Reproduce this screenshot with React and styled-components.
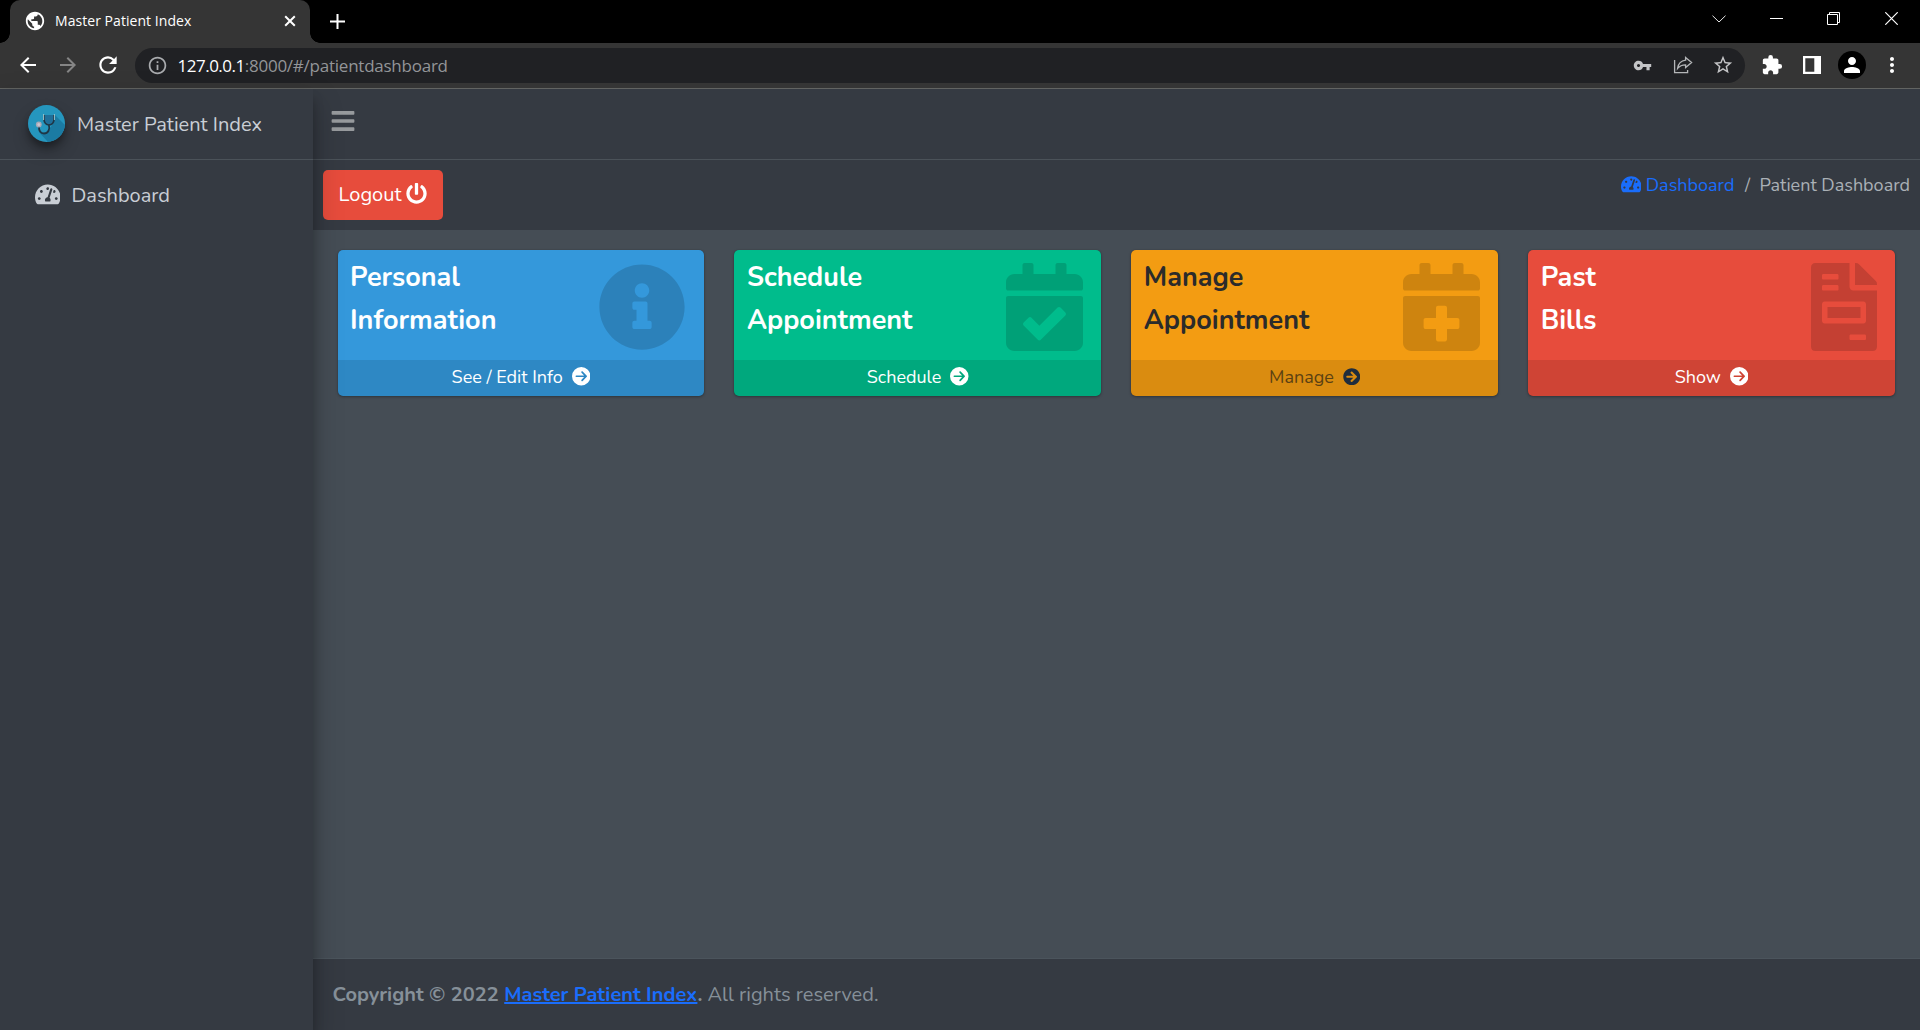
import React from "react";
import styled, { createGlobalStyle } from "styled-components";
import {
  FaTachometerAlt,
  FaBars,
  FaPowerOff,
  FaInfoCircle,
  FaCalendarCheck,
  FaCalendarPlus,
  FaFileInvoice,
  FaArrowCircleRight,
} from "react-icons/fa";
import { FaCircleArrowRight } from "react-icons/fa6";
import {
  MdArrowBack,
  MdArrowForward,
  MdRefresh,
  MdInfoOutline,
  MdVpnKey,
  MdStarBorder,
  MdExtension,
  MdPerson,
  MdMoreVert,
  MdPublic,
} from "react-icons/md";

const GlobalStyle = createGlobalStyle`
  *, *::before, *::after { box-sizing: border-box; }
  body { margin: 0; background: #454d55; }
  svg { display: block; flex: none; }
`;

const Window = styled.div`
  display: flex;
  flex-direction: column;
  height: 1030px;
  overflow: hidden;
  font-family: Nunito, Lato, sans-serif;
`;

/* ---------- browser chrome ---------- */

const TabStrip = styled.div`
  display: flex;
  flex: none;
  height: 43px;
  padding-left: 10px;
  background: #000;
  color: #fff;
  font-family: "Segoe UI", "Open Sans", sans-serif;
`;

const Tab = styled.div`
  position: relative;
  display: flex;
  align-items: center;
  width: 300px;
  padding: 0 13px 1px 14px;
  border-radius: 10px 10px 0 0;
  background: #353535;

  &::before,
  &::after {
    content: "";
    position: absolute;
    bottom: 0;
    width: 10px;
    height: 10px;
  }
  &::before {
    right: 100%;
    background: radial-gradient(circle at 0 0, #000 9.5px, #353535 10px);
  }
  &::after {
    left: 100%;
    background: radial-gradient(circle at 100% 0, #000 9.5px, #353535 10px);
  }
`;

const TabTitle = styled.span`
  flex: 1;
  margin-left: 9px;
  padding-bottom: 1px;
  font-size: 14px;
  line-height: 20px;
  letter-spacing: 0.05px;
`;

const NewTab = styled.div`
  display: flex;
  align-items: center;
  flex: 1;
  padding-left: 20px;
`;

const WindowButton = styled.div`
  display: flex;
  align-items: center;
  justify-content: center;
  width: 57.5px;
  height: 37px;
`;

const Toolbar = styled.div`
  display: flex;
  align-items: center;
  flex: none;
  height: 46px;
  padding: 0 8px 1px 7.5px;
  border-bottom: 1px solid #626462;
  background: #353535;
  color: #fff;
`;

const ToolButton = styled.div`
  display: flex;
  align-items: center;
  justify-content: center;
  width: 40px;
  height: 36px;
  color: ${(p) => p.$color || "#fff"};
`;

const AddressBar = styled.div`
  display: flex;
  align-items: center;
  flex: 1;
  height: 35px;
  margin: 0 7px 0 7.5px;
  padding: 0 2.5px 0 12px;
  border-radius: 18px;
  background: #202124;
  color: #a9abae;
`;

const Url = styled.div`
  flex: 1;
  margin-left: 9.5px;
  padding-top: 1px;
  color: #939598;
  font: 17px/24px "Segoe UI", "Open Sans", sans-serif;
  letter-spacing: -0.24px;
`;

const Host = styled.span`
  color: #fff;
  letter-spacing: -0.5px;
`;

const Avatar = styled.div`
  display: flex;
  align-items: center;
  justify-content: center;
  width: 28px;
  height: 28px;
  border-radius: 50%;
  background: #000;
`;

/* ---------- application ---------- */

const Page = styled.div`
  display: flex;
  flex: 1;
  min-height: 0;
`;

const Sidebar = styled.aside`
  position: relative;
  z-index: 1;
  width: 313px;
  background: #353a42;
  box-shadow: 0 14px 28px rgba(0, 0, 0, 0.25), 0 10px 10px rgba(0, 0, 0, 0.22);
  color: #c9ced5;
`;

const Brand = styled.div`
  display: flex;
  align-items: center;
  height: 71px;
  padding: 0 0 2px 28px;
  border-bottom: 1px solid #4b5259;
`;

const Logo = styled.div`
  width: 37px;
  height: 37px;
  border-radius: 50%;
  overflow: hidden;
  box-shadow: 0 9px 16px rgba(0, 0, 0, 0.25), 0 5px 6px rgba(0, 0, 0, 0.28);
`;

const BrandName = styled.span`
  margin-left: 12px;
  padding-top: 4px;
  font-size: 20px;
  line-height: 30px;
`;

const NavItem = styled.div`
  display: flex;
  align-items: center;
  height: 70px;
  padding-left: 34.5px;
  font-size: 20px;
`;

const NavIcon = styled(FaTachometerAlt)`
  width: ${(p) => p.$size * 1.125}px;
  height: ${(p) => p.$size}px;
  margin: -2px ${(p) => p.$gap}px 0 0;
`;

const Main = styled.div`
  display: flex;
  flex-direction: column;
  flex: 1;
  min-width: 0;
`;

const TopNav = styled.header`
  display: flex;
  align-items: center;
  height: 71px;
  padding: 0 0 6px 17px;
  border-bottom: 1px solid #4b5259;
  background: #353a42;
  color: #979a9d;
`;

const ContentHeader = styled.div`
  display: flex;
  align-items: flex-start;
  justify-content: space-between;
  height: 70px;
  padding: 10px 10px 0 10px;
  background: #353a42;
`;

const LogoutButton = styled.button`
  display: flex;
  align-items: center;
  width: 120px;
  height: 50px;
  padding: 0 0 1px 15.5px;
  border: 0;
  border-radius: 5px;
  background: #e74c3c;
  color: #fff;
  font-family: inherit;
  font-size: 20px;

  svg { margin: -2px 0 0 4.5px; }
`;

const Breadcrumb = styled.nav`
  display: flex;
  align-items: center;
  height: 30px;
  color: #aab0b6;
  font-size: 18px;
`;

const BreadcrumbLink = styled.span`
  display: flex;
  align-items: center;
  color: #1a6dfb;
`;

const Separator = styled.span`
  margin: 0 9.5px 0 10.5px;
`;

const Cards = styled.section`
  display: grid;
  grid-template-columns: repeat(4, 1fr);
  align-content: start;
  gap: 30px;
  flex: 1;
  padding: 20px 25px 20px 24.5px;
  background: #454d55;
`;

const Card = styled.article`
  display: flex;
  flex-direction: column;
  height: 146px;
  border-radius: 5px;
  overflow: hidden;
  background: ${(p) => p.$color};
  color: ${(p) => (p.$dark ? "#1f2d3d" : "#fff")};
  box-shadow: 0 0 1px rgba(0, 0, 0, 0.3), 0 1px 3px rgba(0, 0, 0, 0.3);
`;

const CardBody = styled.div`
  display: flex;
  justify-content: space-between;
  flex: 1;
  padding: 6px 18px 0 12.5px;

  svg {
    width: ${(p) => p.$iconWidth}px;
    height: 88px;
    margin-top: 7px;
    color: rgba(0, 0, 0, 0.15);
  }
`;

const CardTitle = styled.h3`
  display: flex;
  flex-direction: column;
  margin: 0;
  color: ${(p) => (p.$dark ? "#2b2b2b" : "#fff")};
  font-size: 27px;
  font-weight: 700;
  line-height: 43px;
`;

const CardLink = styled.div`
  display: flex;
  align-items: center;
  justify-content: center;
  gap: 9px;
  height: 36px;
  padding-bottom: 3px;
  background: rgba(0, 0, 0, 0.1);
  font-size: 18px;
`;

const LinkText = styled.span`
  padding-top: 1px;
  color: ${(p) => (p.$dark ? "#5b4113" : "#fff")};
  font-weight: 400;
`;

const Footer = styled.footer`
  display: flex;
  align-items: center;
  height: 72px;
  padding: 0 0 0 19.5px;
  border-top: 1px solid #4b545c;
  background: #353a42;
  color: #869099;
  font-size: 20px;
`;

const FooterLink = styled.a`
  color: #1a6dfb;
  text-decoration: underline;
`;

const LogoDrawing = () => (
  <svg width="37" height="37" viewBox="0 0 37 37" fill="none">
    <rect width="37" height="37" fill="#2596be" />
    <path d="M26 9 L37 20 V37 H20 L10 26 L15 29 L20 27 L24 20 Z" fill="#1b7ba3" />
    <path d="M16 10 V14 C16 22 26 22 26 14 V10" fill="#1f6f9a" stroke="#1f3646" strokeWidth="1.7" />
    <path d="M15.6 9 V15 M26.4 9 V15" stroke="#9cc4cc" strokeWidth="1" />
    <path d="M20.8 20 C22.4 24 20 28.5 16 28.5 C12.4 28.5 10.8 25.5 11 22" stroke="#1f3646" strokeWidth="1.8" />
    <circle cx="10.8" cy="19.5" r="2.9" fill="#a6a9b8" />
    <circle cx="10.8" cy="19.5" r="1.5" fill="#cfc4cf" />
  </svg>
);

const cards = [
  { color: "#3498db", lines: ["Personal", "Information"], link: "See / Edit Info", Icon: FaInfoCircle, iconWidth: 88 },
  { color: "#00bc8c", lines: ["Schedule", "Appointment"], link: "Schedule", Icon: FaCalendarCheck, iconWidth: 77 },
  { color: "#f39c12", lines: ["Manage", "Appointment"], link: "Manage", Icon: FaCalendarPlus, iconWidth: 77, dark: true },
  { color: "#e74c3c", lines: ["Past", "Bills"], link: "Show", Icon: FaFileInvoice, iconWidth: 66 },
];

export default function App() {
  return (
    <Window>
      <GlobalStyle />
      <TabStrip>
        <Tab>
          <MdPublic size={22} />
          <TabTitle>Master Patient Index</TabTitle>
          <svg width="14" height="14" viewBox="0 0 14 14" stroke="#fff" strokeWidth="2">
            <path d="M2.2 2.2 L11.8 11.8 M11.8 2.2 L2.2 11.8" />
          </svg>
        </Tab>
        <NewTab>
          <svg width="15" height="15" viewBox="0 0 15 15" stroke="#fff" strokeWidth="2">
            <path d="M7.5 0 V15 M0 7.5 H15" />
          </svg>
        </NewTab>
        <WindowButton>
          <svg width="14" height="8" viewBox="0 0 14 8" fill="none" stroke="#e8e8e8">
            <path d="M0.5 0.7 L7 7 L13.5 0.7" />
          </svg>
        </WindowButton>
        <WindowButton>
          <svg width="13" height="1" viewBox="0 0 13 1"><path d="M0 0 H13 V1 H0 Z" fill="#fff" /></svg>
        </WindowButton>
        <WindowButton>
          <svg width="13" height="13" viewBox="0 0 13 13" fill="none" stroke="#fff">
            <path d="M0.5 2.5 H10.5 V12.5 H0.5 Z M2.5 2.5 V0.5 H12.5 V10.5 H10.5" />
          </svg>
        </WindowButton>
        <WindowButton>
          <svg width="13" height="13" viewBox="0 0 13 13" stroke="#fff" strokeWidth="1.2">
            <path d="M0.3 0.3 L12.7 12.7 M12.7 0.3 L0.3 12.7" />
          </svg>
        </WindowButton>
      </TabStrip>

      <Toolbar>
        <ToolButton><MdArrowBack size={24} /></ToolButton>
        <ToolButton $color="#858585"><MdArrowForward size={24} /></ToolButton>
        <ToolButton><MdRefresh size={26} /></ToolButton>
        <AddressBar>
          <MdInfoOutline size={21} />
          <Url><Host>127.0.0.1</Host>:8000/#/patientdashboard</Url>
          <ToolButton $color="#c4c5c7"><MdVpnKey size={19} /></ToolButton>
          <ToolButton $color="#b4b6b8">
            <svg width="20" height="18" viewBox="0 0 20 18" fill="none" stroke="currentColor" strokeWidth="1.3">
              <path d="M1.6 4 V16.6 H14.6 V14" />
              <path d="M12.6 1.4 L18.6 6.6 L12.6 11.6 V8.8 C9 8.8 6.6 9.8 4.6 12.4 C5.2 8 8 4.8 12.6 4.2 Z" />
            </svg>
          </ToolButton>
          <ToolButton $color="#c4c5c7"><MdStarBorder size={22} /></ToolButton>
        </AddressBar>
        <ToolButton><MdExtension size={22} /></ToolButton>
        <ToolButton>
          <svg width="18" height="18" viewBox="0 0 18 18"><path fillRule="evenodd" fill="#fff" d="M0 0 H18 V18 H0 Z M2.3 2.3 V15.7 H11.3 V2.3 Z" /></svg>
        </ToolButton>
        <ToolButton><Avatar><MdPerson size={24} /></Avatar></ToolButton>
        <ToolButton><MdMoreVert size={24} /></ToolButton>
      </Toolbar>

      <Page>
        <Sidebar>
          <Brand>
            <Logo><LogoDrawing /></Logo>
            <BrandName>Master Patient Index</BrandName>
          </Brand>
          <NavItem><NavIcon $size={22.7} $gap={11.5} />Dashboard</NavItem>
        </Sidebar>
        <Main>
          <TopNav><FaBars size={26} /></TopNav>
          <ContentHeader>
            <LogoutButton>Logout<FaPowerOff size={21} /></LogoutButton>
            <Breadcrumb>
              <BreadcrumbLink><NavIcon $size={18.3} $gap={4.5} />Dashboard</BreadcrumbLink>
              <Separator>/</Separator>
              Patient Dashboard
            </Breadcrumb>
          </ContentHeader>
          <Cards>
            {cards.map(({ color, lines, link, Icon, iconWidth, dark }) => (
              <Card key={link} $color={color} $dark={dark}>
                <CardBody $iconWidth={iconWidth}>
                  <CardTitle $dark={dark}>
                    {lines.map((text) => (
                      <span key={text}>{text}</span>
                    ))}
                  </CardTitle>
                  <Icon />
                </CardBody>
                <CardLink>
                  <LinkText $dark={dark}>{link}</LinkText>
                  {dark ? <FaArrowCircleRight size={17.5} /> : <FaCircleArrowRight size={18.5} />}
                </CardLink>
              </Card>
            ))}
          </Cards>
          <Footer>
            <span>
              <strong>Copyright © 2022 <FooterLink>Master Patient Index</FooterLink>.</strong> All rights reserved.
            </span>
          </Footer>
        </Main>
      </Page>
    </Window>
  );
}
